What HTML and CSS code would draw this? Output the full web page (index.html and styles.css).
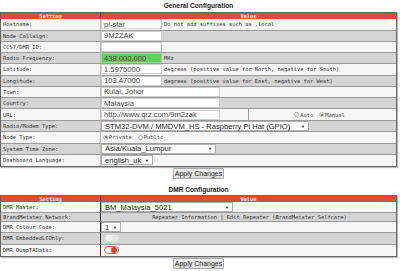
FILE: index.html
```html
<!DOCTYPE html>
<html>
<head>
<meta charset="utf-8">
<title>Configuration</title>
<link rel="stylesheet" href="styles.css">
</head>
<body>
<div class="page">
  <h2 class="title">General Configuration</h2>
  <table class="cfg">
    <tr><th class="k">Setting</th><th>Value</th></tr>
    <tr class="l"><td class="k">Hostname:</td><td><div class="v"><input class="in w61" value="pi-star"><span class="note">Do not add suffixes such as .local</span></div></td></tr>
    <tr class="g"><td class="k">Node Callsign:</td><td><div class="v"><input class="in w61" value="9M2ZAK"></div></td></tr>
    <tr class="l"><td class="k">CCS7/DMR ID:</td><td><div class="v"><input class="in w61" value=""></div></td></tr>
    <tr class="g"><td class="k">Radio Frequency:</td><td><div class="v"><input class="in w61 freq" value="438.000.000"><span class="note">MHz</span></div></td></tr>
    <tr class="l"><td class="k">Latitude:</td><td><div class="v"><input class="in w61" value="1.5975000"><span class="note">degrees (positive value for North, negative for South)</span></div></td></tr>
    <tr class="g"><td class="k">Longitude:</td><td><div class="v"><input class="in w61" value="103.47000"><span class="note">degrees (positive value for East, negative for West)</span></div></td></tr>
    <tr class="l"><td class="k">Town:</td><td><div class="v"><input class="in w119" value="Kulai, Johor"></div></td></tr>
    <tr class="g"><td class="k">Country:</td><td><div class="v"><input class="in w119" value="Malaysia"></div></td></tr>
    <tr class="l"><td class="k">URL:</td><td><div class="v"><input class="in w119" value="http://www.qrz.com/9m2zak"><span class="gap"></span><span class="radios"><span class="radio"></span><span class="rl">Auto</span><span class="radio on"></span><span class="rl">Manual</span></span></div></td></tr>
    <tr class="g"><td class="k">Radio/Modem Type:</td><td><div class="v"><div class="sel w208"><span>STM32-DVM / MMDVM_HS - Raspberry Pi Hat (GPIO)</span><span class="arr">▼</span></div></div></td></tr>
    <tr class="l"><td class="k">Node Type:</td><td><div class="v"><span class="radios left"><span class="radio on"></span><span class="rl">Private</span><span class="radio"></span><span class="rl">Public</span></span></div></td></tr>
    <tr class="g"><td class="k">System Time Zone:</td><td><div class="v"><div class="sel w115"><span>Asia/Kuala_Lumpur</span><span class="arr">▼</span></div></div></td></tr>
    <tr class="l"><td class="k">Dashboard Language:</td><td><div class="v"><div class="sel w52"><span>english_uk</span><span class="arr">▼</span></div></div></td></tr>
  </table>
  <div class="actions"><button class="btn">Apply Changes</button></div>

  <h2 class="title t2">DMR Configuration</h2>
  <table class="cfg dmr">
    <tr><th class="k">Setting</th><th>Value</th></tr>
    <tr class="g2"><td class="k">DMR Master:</td><td><div class="v"><div class="sel w132"><span>BM_Malaysia_5021</span><span class="arr">▼</span></div></div></td></tr>
    <tr class="g short"><td class="k">BrandMeister Network:</td><td><div class="v center"><span class="note">Repeater Information | Edit Repeater (BrandMeister Selfcare)</span></div></td></tr>
    <tr class="g2"><td class="k">DMR Colour Code:</td><td><div class="v"><div class="sel w20"><span>1</span><span class="arr">▼</span></div></div></td></tr>
    <tr class="l"><td class="k gray">DMR EmbeddedLCOnly:</td><td class="gray"><div class="v"><span class="tog"><span class="knob"></span></span></div></td></tr>
    <tr class="g2"><td class="k">DMR DumpTAData:</td><td><div class="v"><span class="tog on"><span class="knob"></span></span></div></td></tr>
  </table>
  <div class="actions"><button class="btn">Apply Changes</button></div>
</div>
</body>
</html>
```
FILE: styles.css
```css
* { box-sizing: border-box; }
html, body { margin: 0; padding: 0; background: #fff; }
body { font-family: "DejaVu Sans Mono", monospace; color: #333; font-size: 5.4px; }
.page { width: 397px; }

.title {
  margin: 0;
  height: 12px;
  text-align: center;
  font: bold 6.6px/12px "Liberation Sans", sans-serif;
  color: #222;
}
.t2 { height: 16px; line-height: 21px; }

.cfg {
  width: 397px;
  border-collapse: separate;
  border-spacing: 0;
  border: 1px solid #666;
  box-shadow: 1px 1px 1px #bbb;
}
.cfg th {
  background: #dd4b39;
  color: #fbe3e0;
  height: 6px;
  padding: 0;
  border-right: 1px solid #555;
  font: bold 5.4px/5px "DejaVu Sans Mono", monospace;
  text-align: center;
}
.cfg th:last-child { border-right: 0; }
.cfg th.k { width: 100px; }
.cfg td {
  height: 11px;
  padding: 0;
  border-bottom: 1px solid #9a9a9a;
  vertical-align: middle;
}
.cfg tr:last-child td { border-bottom: 0; }
.cfg td.k {
  padding-left: 2px;
  border-right: 1px solid #bdbdbd;
  color: #333;
}
.dmr td.k { border-right: 1px solid #333; }
.cfg tr.l td { background: #f6f6f6; height: 11.5px; }
.cfg tr.g td { background: #d4d4d4; }
.cfg tr.g2 td { background: #f6f6f6; }
.cfg td.gray { background: #d4d4d4 !important; }
.cfg tr.short td { height: 9px; }

.v { display: flex; align-items: center; height: 100%; }
.v.center { justify-content: center; }
.note { padding-left: 2px; color: #333; white-space: nowrap; }

.in {
  height: 10px;
  margin: 0;
  padding: 0 2px;
  border: 1px solid #cfcfcf;
  background: #fff;
  font: 7.6px "Liberation Sans", sans-serif;
  color: #444;
  outline: none;
}
.w61 { width: 61px; }
.w119 { width: 119px; }
.freq { background: #5cd25c; border-color: #9bd89b; }

.gap { width: 29px; height: 11px; border-right: 1px solid #9a9a9a; }
.radios { flex: 1; display: flex; align-items: center; justify-content: center; }
.radios.left { justify-content: flex-start; padding-left: 2px; }
.radio {
  width: 5px; height: 5px;
  border-radius: 50%;
  border: 1px solid #b5b5b5;
  background: #eee;
  margin-right: 1px;
  display: flex; align-items: center; justify-content: center;
}
.radio.on::after {
  content: "";
  width: 2px; height: 2px; border-radius: 50%;
  background: #555;
}
.rl { margin-right: 6px; color: #444; }

.sel {
  height: 10px;
  display: flex; align-items: center; justify-content: space-between;
  padding: 0 3px;
  background: #fff;
  border: 1px solid #b0b0b0;
  font: 7.6px "Liberation Sans", sans-serif;
  color: #222;
  white-space: nowrap;
}
.arr { font-size: 4px; color: #111; }
.w208 { width: 208px; }
.w115 { width: 115px; }
.w52 { width: 52px; }
.w132 { width: 132px; }
.w20 { width: 20px; }

.tog {
  margin-left: 3px;
  width: 15px; height: 8px;
  border-radius: 4px;
  background: #e6e6e6;
  border: 1px solid #dcdcdc;
  display: flex; align-items: center; padding: 0 1px;
}
.tog .knob { width: 6px; height: 6px; border-radius: 50%; background: #f4f4f4; }
.tog.on { background: #fff; border-color: #e0594b; justify-content: flex-end; }
.tog.on .knob { background: #e5392b; }

.actions { display: flex; justify-content: center; padding-top: 1px; }
.btn {
  height: 11px;
  width: 51px;
  padding: 0;
  margin: 0;
  border: 1px solid #aaa;
  border-radius: 1px;
  background: linear-gradient(#f4f4f4, #dedede);
  font: 7px/9px "Liberation Sans", sans-serif;
  color: #222;
}
```
